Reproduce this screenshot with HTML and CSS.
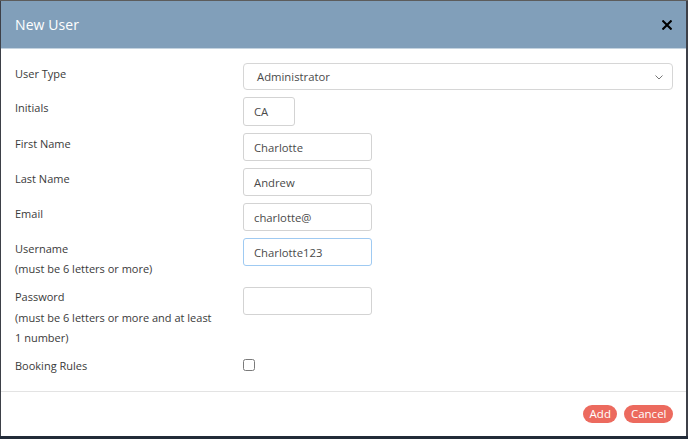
FILE: index.html
```html
<!DOCTYPE html>
<html>
<head>
<meta charset="utf-8">
<link rel="stylesheet" href="styles.css">
</head>
<body>
<div class="modal">
  <div class="modal-header">
    <h1 class="modal-title">New User</h1>
    <button class="close" aria-label="Close">
      <svg width="10" height="10" viewBox="0 0 10 10"><path d="M1.2 1.2L8.8 8.8M8.8 1.2L1.2 8.8" stroke="#000" stroke-width="2.1" stroke-linecap="square"/></svg>
    </button>
  </div>
  <form class="modal-body">
    <label class="lbl">User Type</label>
    <div class="field">
      <div class="select">
        <span>Administrator</span>
        <svg class="chev" width="8" height="5" viewBox="0 0 8 5"><path d="M0.5 0.5L4 4L7.5 0.5" fill="none" stroke="#666" stroke-width="0.9"/></svg>
      </div>
    </div>

    <label class="lbl">Initials</label>
    <div class="field"><div class="input initials">CA</div></div>

    <label class="lbl">First Name</label>
    <div class="field"><div class="input">Charlotte</div></div>

    <label class="lbl">Last Name</label>
    <div class="field"><div class="input">Andrew</div></div>

    <label class="lbl">Email</label>
    <div class="field"><div class="input">charlotte@</div></div>

    <label class="lbl">Username<br>(must be 6 letters or more)</label>
    <div class="field"><div class="input focus">Charlotte123</div></div>

    <label class="lbl">Password<br>(must be 6 letters or more and at least<br>1 number)</label>
    <div class="field"><div class="input"></div></div>

    <label class="lbl">Booking Rules</label>
    <div class="field"><span class="checkbox"></span></div>
  </form>
  <div class="modal-footer">
    <button class="btn">Add</button>
    <button class="btn">Cancel</button>
  </div>
</div>
</body>
</html>
```

FILE: styles.css
```css
* { box-sizing: border-box; }
html, body { margin: 0; }
body {
  width: 688px;
  height: 439px;
  padding: 1px 2px 3px 1px;
  background: linear-gradient(to bottom, #5c5c5c 0, #5c5c5c 1px, #3d4048 1px, #3d4048 436px, #222b38 436px);
  font-family: "Open Sans", "Liberation Sans", sans-serif;
  overflow: hidden;
}
.modal {
  width: 685px;
  height: 435px;
  background: #fff;
  display: flex;
  flex-direction: column;
}
.modal-header {
  flex: none;
  height: 48px;
  background: #819fba;
  border-bottom: 1px solid #c4d3e0;
  display: flex;
  align-items: center;
  justify-content: space-between;
  padding: 0 14px 0 14px;
}
.modal-title {
  margin: 0;
  font-weight: 400;
  font-size: 14px;
  color: #fff;
  letter-spacing: 0.1px;
}
.close {
  border: 0;
  background: none;
  padding: 0;
  width: 10px;
  height: 10px;
  display: flex;
}
.modal-body {
  flex: none;
  margin: 0;
  padding: 14px 13px 14px 14px;
  display: grid;
  grid-template-columns: 228px 1fr;
  align-items: start;
  row-gap: 7px;
  border-bottom: 1px solid #e3e3e3;
}
.lbl {
  font-size: 11px;
  line-height: 20.5px;
  padding-top: 0.5px;
  color: #3a3a3a;
}
.field { display: flex; align-items: flex-start; }
.select {
  width: 100%;
  height: 27px;
  border: 1px solid #d6d6d6;
  border-radius: 4px;
  display: flex;
  align-items: center;
  justify-content: space-between;
  padding: 0 9px 0 13px;
  font-size: 11.3px;
  color: #4a4a4a;
}
.chev { margin-top: 1px; }
.input {
  width: 129px;
  height: 28px;
  border: 1px solid #d3d3d3;
  border-radius: 3px;
  padding: 0 10px;
  display: flex;
  align-items: center;
  font-size: 11.3px;
  color: #4a4a4a;
}
.input.initials { width: 52px; height: 29px; }
.input.focus { border-color: #9fcaf2; }
.checkbox {
  margin-top: 3px;
  width: 12px;
  height: 12px;
  border: 1px solid #7a7a7a;
  border-radius: 2.5px;
}
.modal-footer {
  flex: 1;
  display: flex;
  justify-content: flex-end;
  align-items: flex-start;
  gap: 7px;
  padding: 13px 13px 0 0;
}
.btn {
  height: 18px;
  border: 0;
  border-radius: 9px;
  background: #ec6a5e;
  color: #fff;
  font-family: "Open Sans", "Liberation Sans", sans-serif;
  font-size: 11.5px;
  padding: 0 6.5px;
  line-height: 18px;
}
```
